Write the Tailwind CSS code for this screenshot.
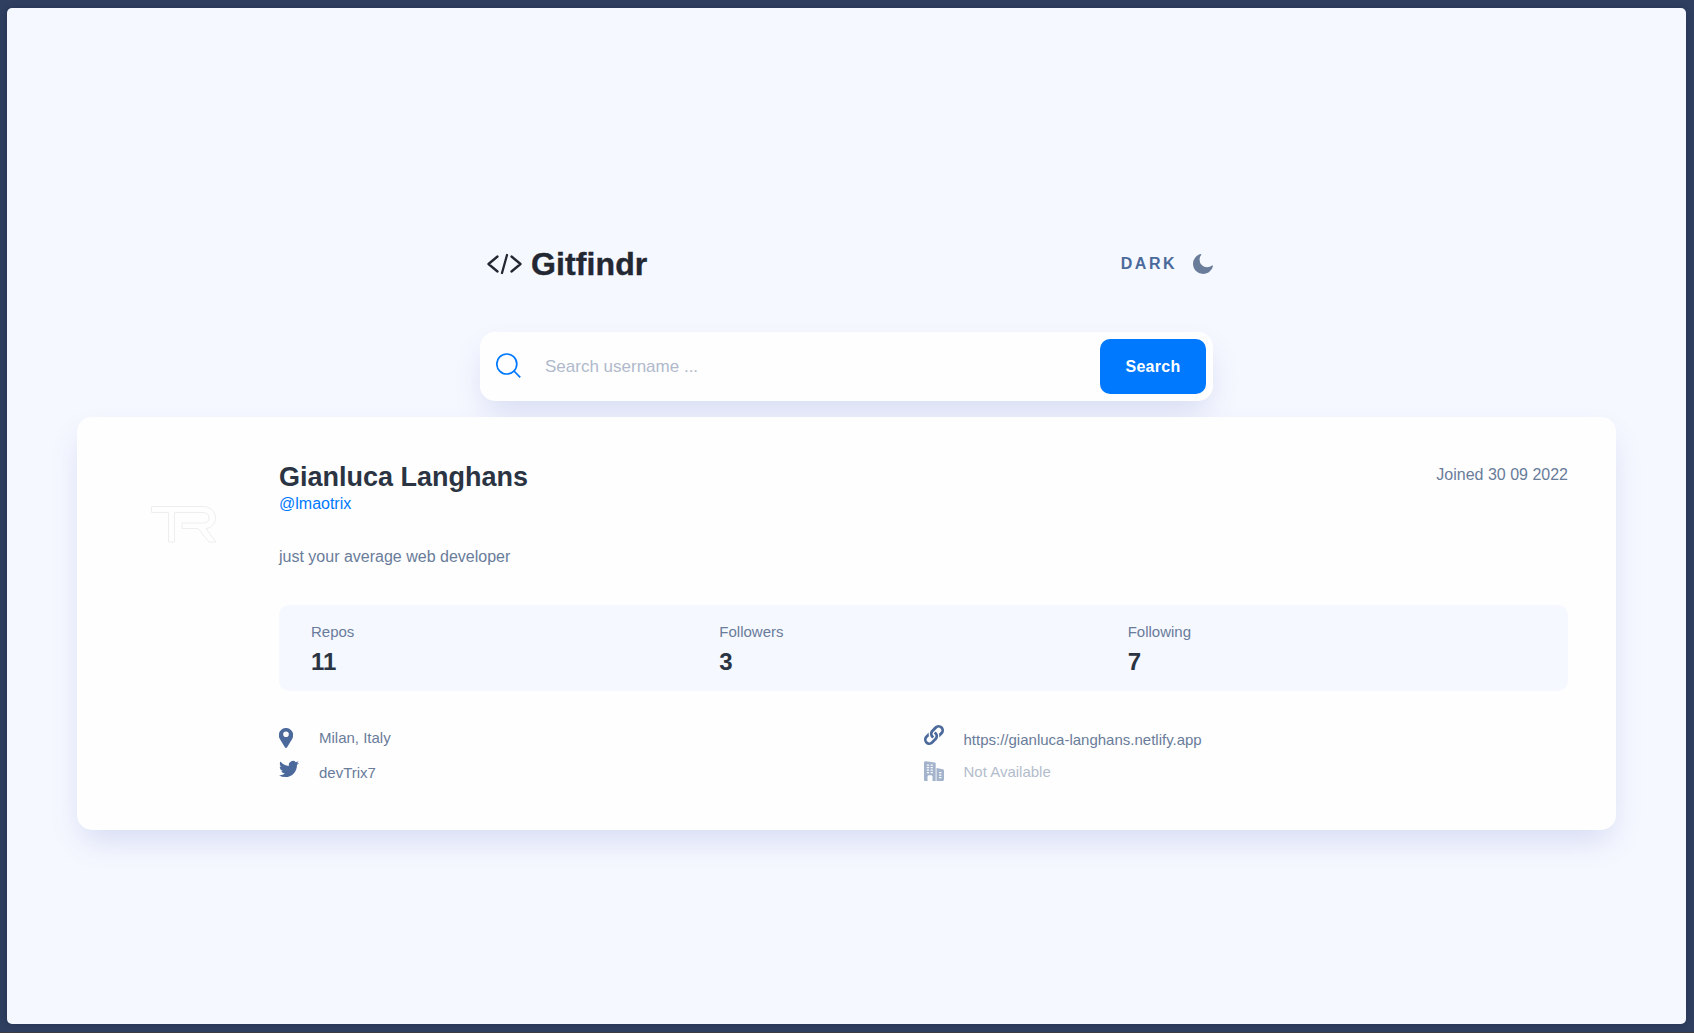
<!DOCTYPE html>
<html lang="en">
<head>
<meta charset="utf-8">
<title>Gitfindr</title>
<script src="https://cdn.jsdelivr.net/npm/@tailwindcss/browser@4"></script>
</head>
<body class="h-screen overflow-hidden border-b border-[#3c3c40] bg-[#2f3f60] pt-2 pr-2 pl-[7px] font-['Liberation_Sans',Arial,sans-serif] text-[#697c9a]">
<div class="flex h-[1016px] flex-col items-center rounded-[5px] bg-[#f6f8ff] pt-[239px] shadow-[0_0_6px_rgba(20,28,50,0.3)]">
  <header class="flex h-[34px] w-[733px] items-center">
    <svg class="ml-[7px] h-[22px] w-[35px]" viewBox="0 0 35 22" fill="none" stroke="#222731" stroke-width="2.3" stroke-linecap="round" stroke-linejoin="round"><path d="M10.500 3.500 1.500 11l9 7.500M20 2l-5 18M24.500 3.500l9 7.500-9 7.500"/></svg>
    <h1 class="ml-[9px] text-[32px] leading-[34px] font-bold tracking-[0.1px] text-[#222731] [-webkit-text-stroke:0.4px_#222731]">Gitfindr</h1>
    <div class="ml-auto flex items-center gap-4">
      <span class="text-base leading-6 font-bold tracking-[2.5px] text-[#4b6a9b]">DARK</span>
      <svg class="h-5 w-5" viewBox="0 0 20 20" fill="#697c9a"><path d="M19.513 11.397a.701.701 0 00-.588.128 7.496 7.496 0 01-2.276 1.336 7.101 7.101 0 01-2.583.462 7.505 7.505 0 01-5.32-2.209 7.568 7.568 0 01-2.199-5.342c0-.873.154-1.72.41-2.49a6.904 6.904 0 011.227-2.21.657.657 0 00-.102-.924.701.701 0 00-.589-.128C5.32.61 3.427 1.92 2.072 3.666A10.158 10.158 0 000 9.83c0 2.8 1.125 5.342 2.967 7.19a10.025 10.025 0 007.16 2.98c2.353 0 4.527-.822 6.266-2.183a10.13 10.13 0 003.58-5.624.623.623 0 00-.46-.796z"/></svg>
    </div>
  </header>

  <form class="mt-[51px] flex h-[69px] w-[733px] shrink-0 items-center rounded-[15px] bg-[#fefefe] pr-[7px] pl-4 shadow-[0_15px_32px_-6px_rgba(70,96,187,0.2)]">
    <svg class="mb-0.5 h-[25px] w-[25px]" viewBox="0 0 25 25" fill="none" stroke="#0079ff" stroke-width="1.7"><circle cx="10.800" cy="11" r="10"/><path d="m17.500 17.500 6.700 6.900"/></svg>
    <span class="ml-6 text-[17px] leading-6 text-[#b0b9cb]">Search username ...</span>
    <button type="button" class="ml-auto h-[55px] w-[106px] rounded-[10px] bg-[#0079ff] text-base font-bold tracking-[0.3px] text-white">Search</button>
  </form>

  <main class="mt-4 flex h-[413px] w-[1539px] shrink-0 rounded-[15px] bg-[#fefefe] pt-[45px] pr-12 shadow-[0_15px_32px_-6px_rgba(70,96,187,0.2)]">
    <div class="w-[202px] shrink-0 pt-11 pl-[74px]">
      <svg class="h-[38px] w-[67px]" viewBox="0 0 67 38" fill="none" stroke="#eeeeef" stroke-width="1"><path d="M.5.500H52c7 0 12.500 5 12.500 11s-4 10.500-9.500 11L65 36h-7L47 22.500H31v-5.500h21c4 0 6-2 6-5s-2-5.500-6-5.500H23.500v29.500H17.500v-29.500H.500z"/></svg>
    </div>
    <div class="flex-1">
      <div class="flex justify-between">
        <h2 class="text-[27px] leading-[31px] font-bold text-[#2b3442]">Gianluca Langhans</h2>
        <span class="pt-[1px] text-base leading-6">Joined 30 09 2022</span>
      </div>
      <p class="-mt-px text-base leading-6 text-[#0079ff]">@lmaotrix</p>
      <p class="mt-[29px] text-base leading-6">just your average web developer</p>
      <dl class="mt-9 grid h-[86px] grid-cols-3 rounded-[10px] bg-[#f6f8ff] px-8 pt-4 text-[15px]">
        <div><dt class="leading-[22px]">Repos</dt><dd class="mt-[5px] text-2xl leading-7 font-bold text-[#2b3442]">11</dd></div>
        <div><dt class="leading-[22px]">Followers</dt><dd class="mt-[5px] text-2xl leading-7 font-bold text-[#2b3442]">3</dd></div>
        <div><dt class="leading-[22px]">Following</dt><dd class="mt-[5px] text-2xl leading-7 font-bold text-[#2b3442]">7</dd></div>
      </dl>
      <div class="mt-[34px] grid grid-cols-2 text-[15px] leading-5">
        <div>
          <div class="flex h-[35px]">
            <div class="w-10 pt-[3px]"><svg class="h-5 w-3.5" viewBox="0 0 14 20" fill="#4b6a9b"><path fill-rule="evenodd" d="M13.200 3.607C12 1.462 9.800.115 7.300.004a6.410 6.410 0 00-.6 0C4.200.115 2 1.462.8 3.607a7.200 7.200 0 00-.1 7.019l5.200 8.600.006.012c.22.450.650.762 1.094.762s.874-.312 1.094-.762l.006-.012 5.200-8.600a7.200 7.200 0 00-.1-7.019zM7 9.063a2.813 2.813 0 110-5.626 2.813 2.813 0 010 5.626z"/></svg></div>
            <span class="pt-[3px]">Milan, Italy</span>
          </div>
          <div class="flex">
            <div class="w-10"><svg class="h-[18px] w-5" viewBox="0 0 20 18" fill="#4b6a9b"><path d="M20 2.799a8.549 8.549 0 01-2.363.647 4.077 4.077 0 001.804-2.266 8.194 8.194 0 01-2.6.993A4.099 4.099 0 009.750 4.977c0 .324.027.637.095.934-3.409-.166-6.425-1.8-8.452-4.288a4.128 4.128 0 00-.56 2.072c0 1.420.732 2.679 1.821 3.407a4.050 4.050 0 01-1.853-.505v.045a4.119 4.119 0 003.285 4.028 4.092 4.092 0 01-1.075.135c-.263 0-.528-.015-.776-.07.531 1.624 2.038 2.818 3.831 2.857A8.239 8.239 0 010 15.283a11.543 11.543 0 006.290 1.840c7.545 0 11.670-6.250 11.670-11.667 0-.182-.006-.357-.015-.53A8.180 8.180 0 0020 2.798z"/></svg></div>
            <span class="pt-[3px]">devTrix7</span>
          </div>
        </div>
        <div>
          <div class="flex h-9">
            <div class="w-10"><svg class="h-5 w-5" viewBox="0 0 20 20" fill="#4b6a9b"><path d="M7.404 5.012c-2.355 2.437-1.841 6.482.857 8.273.089.06.207.048.283-.027.568-.555 1.049-1.093 1.470-1.776a.213.213 0 00-.084-.3A2.743 2.743 0 018.878 10.100a2.640 2.640 0 01-.223-1.803c.168-.815 1.043-1.573 1.711-2.274l-.004-.002 2.504-2.555a2.568 2.568 0 013.648-.019 2.600 2.600 0 01.037 3.666l-1.517 1.560a.266.266 0 00-.06.273c.35 1.012.435 2.440.201 3.519-.006.03.031.05.053.028l3.228-3.295c2.062-2.105 2.044-5.532-.038-7.615a5.416 5.416 0 00-7.691.04L7.417 4.998l-.013.014z"/><path d="M13.439 13.750a.401.401 0 00.006-.003c.659-1.204.788-2.586.48-3.933l-.002.002-.001-.001a5.434 5.434 0 00-2.190-3.124.3.3 0 00-.333.015c-.553.448-1.095 1.021-1.452 1.754a.243.243 0 00.096.317c.415.240.790.593 1.040 1.061h.001c.196.330.388.958.263 1.632-.116.894-1.019 1.714-1.736 2.453-.546.559-1.935 1.974-2.490 2.542a2.600 2.600 0 01-3.666.037 2.600 2.600 0 01-.038-3.666l1.521-1.564A.266.266 0 005 11.004c-.338-1.036-.43-2.432-.217-3.510.006-.03-.031-.049-.053-.027l-3.179 3.245c-2.083 2.126-2.066 5.588.04 7.693 2.125 2.083 5.570 2.048 7.653-.078.723-.81 3.821-3.678 4.195-4.577z"/></svg></div>
            <span class="pt-[5px]">https://gianluca-langhans.netlify.app</span>
          </div>
          <div class="flex opacity-50">
            <div class="w-10"><svg class="h-5 w-5" viewBox="0 0 20 20" fill="#4b6a9b"><path d="M10.858 1.558 1.700.167A1.477 1.477 0 00.517.492 1.490 1.490 0 000 1.608v17.559c0 .458.375.833.833.833h2.709v-4.375c0-.808.650-1.458 1.458-1.458h2.083c.809 0 1.459.650 1.459 1.458V20h3.125V2.375a.833.833 0 00-.809-.817zM4.583 12.292h-1.250a.625.625 0 010-1.250h1.250a.625.625 0 010 1.250zm0-2.500h-1.250a.625.625 0 010-1.250h1.250a.625.625 0 010 1.250zm0-2.500h-1.250a.625.625 0 010-1.250h1.250a.625.625 0 010 1.250zm0-2.500h-1.250a.625.625 0 010-1.250h1.250a.625.625 0 010 1.250zm3.750 7.500h-1.250a.625.625 0 010-1.250h1.250a.625.625 0 010 1.250zm0-2.500h-1.250a.625.625 0 010-1.250h1.250a.625.625 0 010 1.250zm0-2.500h-1.250a.625.625 0 010-1.250h1.250a.625.625 0 010 1.250zm0-2.500h-1.250a.625.625 0 010-1.250h1.250a.625.625 0 010 1.250zM18.887 8.268 12.500 6.930V20h5.958c.850 0 1.542-.692 1.542-1.542V9.650c0-.650-.445-1.236-1.113-1.382zM16.875 17.292h-1.250a.625.625 0 010-1.250h1.250a.625.625 0 010 1.250zm0-2.500h-1.250a.625.625 0 010-1.250h1.250a.625.625 0 010 1.250zm0-2.500h-1.250a.625.625 0 010-1.250h1.250a.625.625 0 010 1.250z"/></svg></div>
            <span class="pt-[1px]">Not Available</span>
          </div>
        </div>
      </div>
    </div>
  </main>
</div>
</body>
</html>
